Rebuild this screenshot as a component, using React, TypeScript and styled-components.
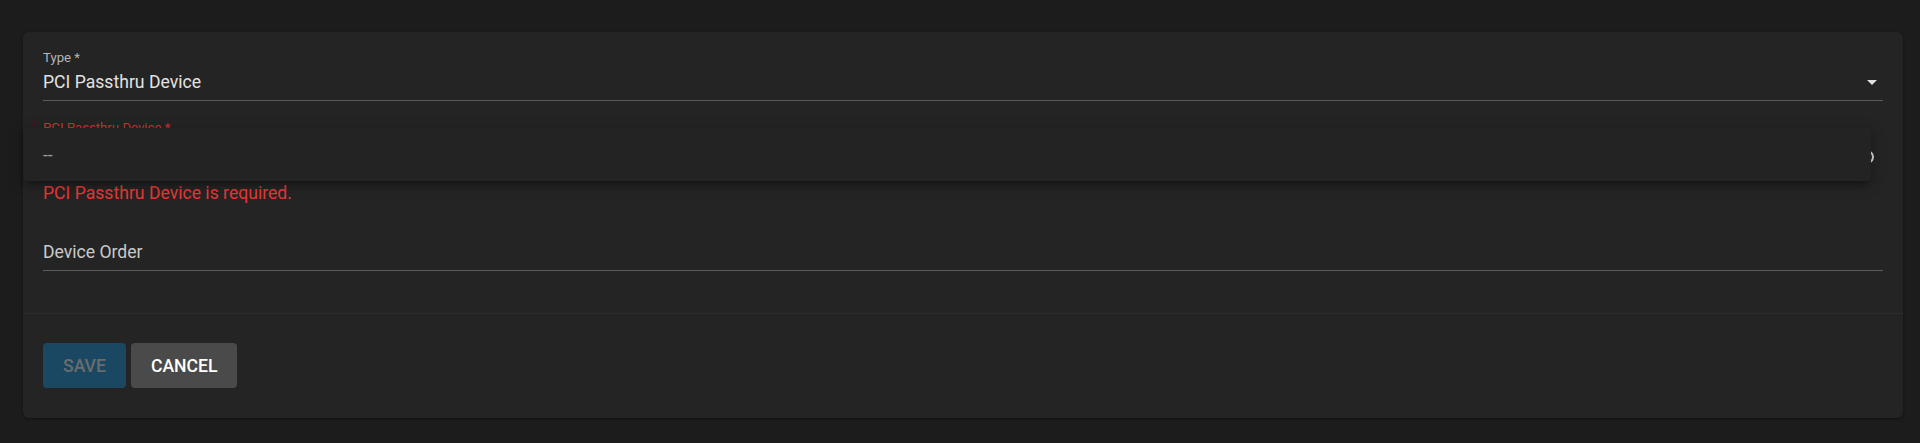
import React from "react";
import styled, { createGlobalStyle } from "styled-components";

const GlobalStyle = createGlobalStyle`
  html, body {
    margin: 0;
    padding: 0;
    background: #1c1c1c;
    font-family: Roboto, "Liberation Sans", sans-serif;
  }
`;

const App = () => {
  return (
    <Page>
      <GlobalStyle />
      <Card>
        <Form>
          <Field>
            <Label>Type *</Label>
            <Control>
              <Value>PCI Passthru Device</Value>
              <Icon viewBox="0 0 24 24">
                <path d="M7 10l5 5 5-5z" fill="#e0e0e0" />
              </Icon>
            </Control>
          </Field>

          <Field $gap={19}>
            <Label $error>PCI Passthru Device *</Label>
            <Control $hidden>
              <Value />
              <Icon viewBox="0 0 24 24">
                <circle cx="7" cy="17" r="6" fill="none" stroke="#dcdcdc" strokeWidth="2" />
              </Icon>
            </Control>
            <Helper>PCI Passthru Device is required.</Helper>
          </Field>

          <Field $gap={15}>
            <Label />
            <Control>
              <Value $muted>Device Order</Value>
            </Control>
          </Field>
        </Form>

        <Actions>
          <Button $variant="primary" disabled>
            Save
          </Button>
          <Button>Cancel</Button>
        </Actions>

        <Menu>
          <MenuItem>--</MenuItem>
        </Menu>
      </Card>
    </Page>
  );
};

export default App;

const Page = styled.div`
  padding: 32px 17px 26px 23px;
`;

const Card = styled.div`
  position: relative;
  background: #242424;
  border-radius: 6px;
  box-shadow: 0 1px 3px rgba(0, 0, 0, 0.4);
`;

const Form = styled.div`
  display: flex;
  flex-direction: column;
  padding: 18px 20px 42px;
  border-bottom: 1px solid #2d2d2d;
`;

const Field = styled.div<{ $gap?: number }>`
  display: flex;
  flex-direction: column;
  margin-top: ${(p) => p.$gap || 0}px;
`;

const Label = styled.div<{ $error?: boolean }>`
  height: 16px;
  font-size: 13.2px;
  line-height: 16px;
  color: ${(p) => (p.$error ? "#d32f2f" : "#b6b6b6")};
`;

const Control = styled.div<{ $hidden?: boolean }>`
  display: flex;
  align-items: center;
  padding: 4px 0 6px;
  border-bottom: 1px solid ${(p) => (p.$hidden ? "transparent" : "#5c5c5c")};
`;

const Value = styled.div<{ $muted?: boolean }>`
  flex: 1;
  height: 24px;
  font-size: 17.6px;
  line-height: 24px;
  color: ${(p) => (p.$muted ? "#cacaca" : "#e2e2e2")};
`;

const Icon = styled.svg`
  width: 24px;
  height: 24px;
  margin-right: -1px;
`;

const Helper = styled.div`
  margin-top: 10px;
  font-size: 17.6px;
  line-height: 24px;
  color: #e53935;
`;

const Actions = styled.div`
  display: flex;
  gap: 5px;
  padding: 29px 20px 30px;
`;

const Button = styled.button<{ $variant?: "primary" }>`
  height: 45px;
  padding: 0 20px;
  border: none;
  border-radius: 4px;
  font-family: Roboto, "Liberation Sans", sans-serif;
  font-size: 17.6px;
  font-weight: 500;
  text-transform: uppercase;
  background: ${(p) => (p.$variant === "primary" ? "#1a4863" : "#4a4a4a")};
  color: ${(p) => (p.$variant === "primary" ? "#6c6c6c" : "#ffffff")};
  cursor: pointer;

  &:disabled {
    cursor: default;
  }
`;

const Menu = styled.div`
  position: absolute;
  left: 0;
  top: 96px;
  width: calc(100% - 32px);
  height: 53px;
  display: flex;
  align-items: center;
  background: #232323;
  border-radius: 4px;
  box-shadow: 0 5px 6px -3px rgba(0, 0, 0, 0.35), 0 3px 14px 2px rgba(0, 0, 0, 0.2);
`;

const MenuItem = styled.div`
  padding: 0 20px;
  font-size: 17.6px;
  line-height: 24px;
  color: #9a9a9a;
`;
